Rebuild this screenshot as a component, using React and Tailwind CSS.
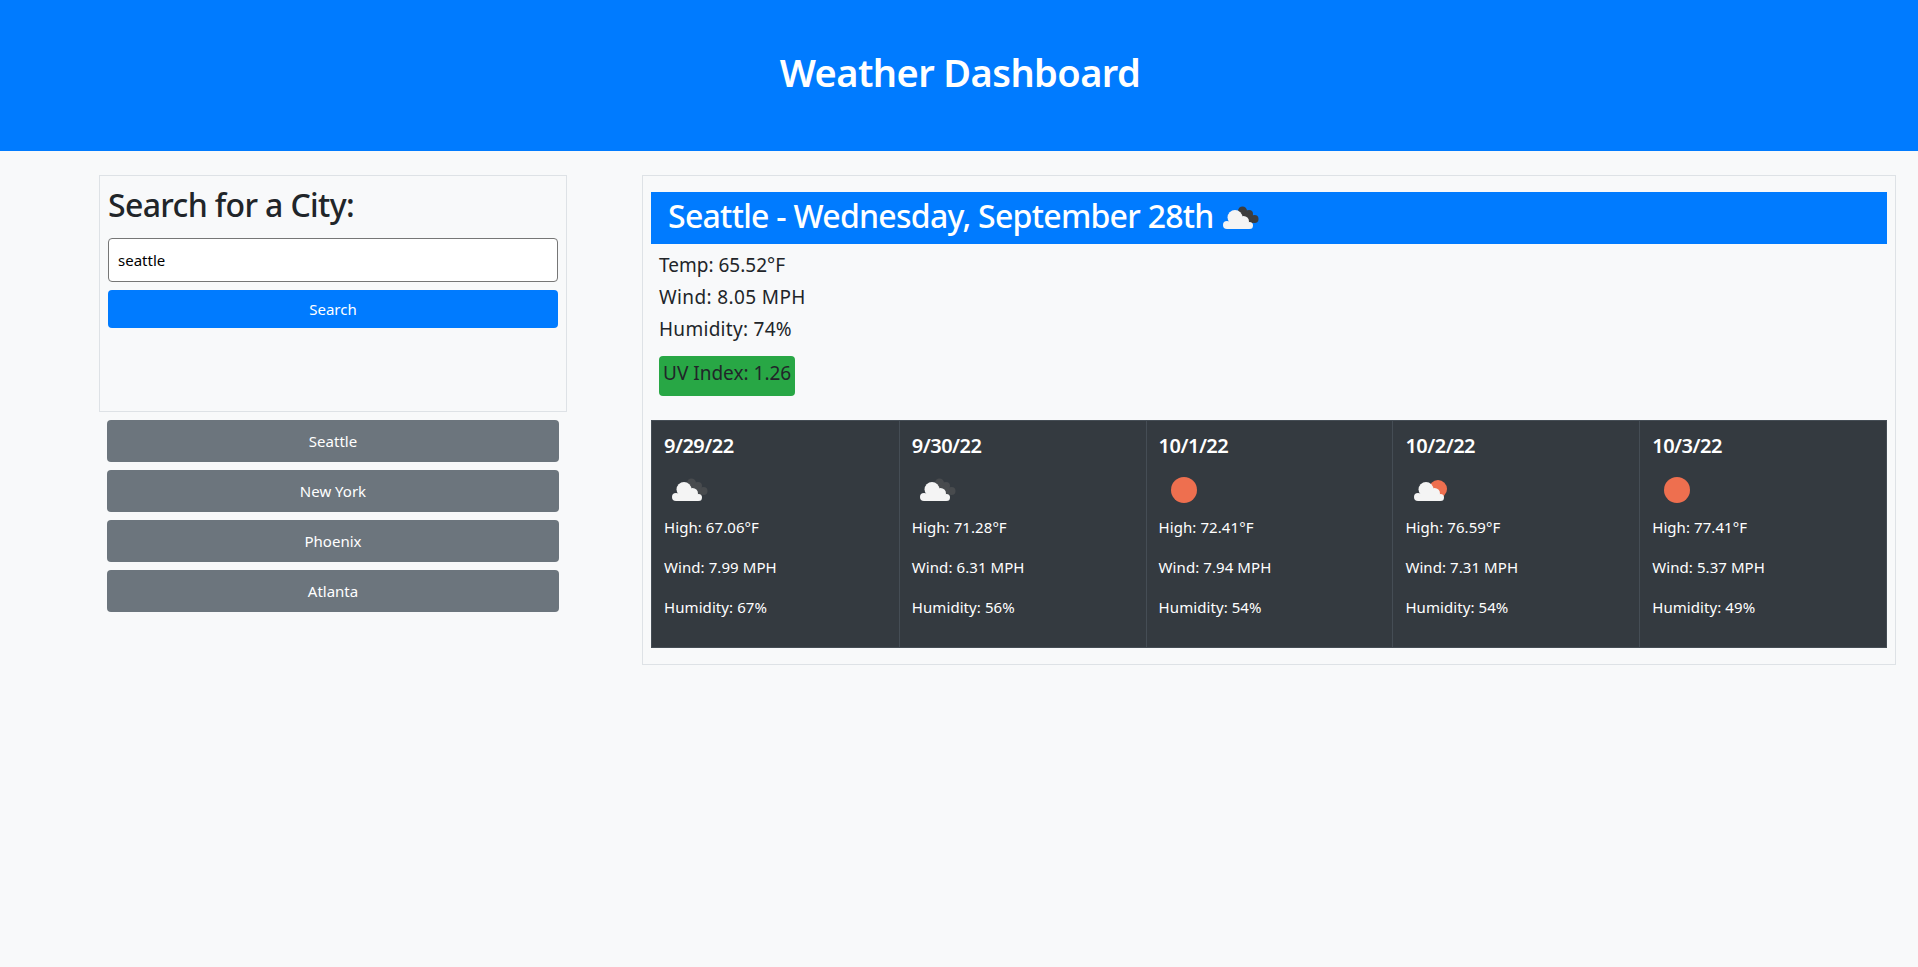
const forecast = [
  { date: "9/29/22", icon: "clouds", high: "67.06", wind: "7.99", humidity: "67" },
  { date: "9/30/22", icon: "clouds", high: "71.28", wind: "6.31", humidity: "56" },
  { date: "10/1/22", icon: "sun", high: "72.41", wind: "7.94", humidity: "54" },
  { date: "10/2/22", icon: "partly", high: "76.59", wind: "7.31", humidity: "54" },
  { date: "10/3/22", icon: "sun", high: "77.41", wind: "5.37", humidity: "49" },
];

const cities = ["Seattle", "New York", "Phoenix", "Atlanta"];

const WhiteCloud = ({ dx = 0 }) => (
  <g fill="#f4f4f4" transform={`translate(${dx} 0)`}>
    <circle cx="20" cy="24.500" r="7.500" />
    <circle cx="28.500" cy="28.500" r="5.500" />
    <circle cx="12" cy="32" r="4" />
    <circle cx="34.500" cy="32.500" r="3.500" />
    <rect x="12" y="30" width="22" height="6" />
  </g>
);

const WeatherIcon = ({ type, dark = "#484b4e" }) => (
  <svg viewBox="0 0 50 50" className="h-[50px] w-[50px] shrink-0">
    {type === "sun" && <circle cx="25" cy="25" r="13" fill="#ee6f4f" />}
    {type === "partly" && (
      <>
        <circle cx="33" cy="24" r="9" fill="#ee6f4f" />
        <WhiteCloud dx={1} />
      </>
    )}
    {type === "clouds" && (
      <>
        <g fill={dark}>
          <circle cx="27.500" cy="18" r="4.500" />
          <circle cx="34" cy="21" r="4" />
          <circle cx="39.500" cy="26" r="4" />
          <path d="M25 20 37 21 38 30H28z" />
        </g>
        <WhiteCloud />
      </>
    )}
  </svg>
);

const App = () => {
  return (
    <div className="min-h-[967px] bg-[#f8f9fa] font-['Noto_Sans',sans-serif] text-[#212529]">
      <header className="flex h-[151px] items-center justify-center bg-[#007bff] pb-[7px] pl-[2px]">
        <h1 className="text-[38px] leading-[48px] font-semibold tracking-[-0.015em] text-white">
          Weather Dashboard
        </h1>
      </header>

      <main className="flex pt-6 pl-[99px]">
        <aside className="w-[468px] shrink-0">
          <form className="h-[237px] border border-[#dee2e6] px-2 pt-[5px]">
            <h2 className="mb-[9px] text-[32px] leading-[48px] font-medium tracking-[-0.02em]">
              Search for a City:
            </h2>
            <input
              readOnly
              value="seattle"
              className="mb-2 block h-[44px] w-full rounded-sm border border-[#767676] bg-white px-[9px] text-[15px] text-black outline-none"
            />
            <button
              type="button"
              className="block h-[38px] w-full rounded-[4px] bg-[#007bff] text-[15px] text-white"
            >
              Search
            </button>
          </form>
          <div className="mt-2 flex flex-col gap-2 px-2">
            {cities.map((city) => (
              <button
                key={city}
                type="button"
                className="h-[42px] w-full rounded-[4px] bg-[#6c757d] text-[15px] text-white"
              >
                {city}
              </button>
            ))}
          </div>
        </aside>

        <section className="ml-[75px] h-[490px] w-[1254px] shrink-0 border border-[#dee2e6] pt-4 pr-2 pl-2">
          <div className="flex h-[52px] items-center bg-[#007bff] pl-[17px] text-white">
            <h2 className="mr-px pb-1 text-[32px] leading-[48px] font-medium tracking-[-0.0225em]">
              Seattle - Wednesday, September 28th
            </h2>
            <WeatherIcon type="clouds" dark="#3d3d3d" />
          </div>

          <div className="px-2 pt-[9px]">
            <p className="mb-2 text-[19px] leading-6">Temp: 65.52°F</p>
            <p className="mb-2 text-[19px] leading-6 tracking-[0.02em]">Wind: 8.05 MPH</p>
            <p className="mb-2 text-[19px] leading-6 tracking-[0.015em]">Humidity: 74%</p>
            <div className="mt-[7px] inline-flex h-10 items-center rounded-[4px] bg-[#28a745] px-1 pb-[6px] text-[19px] leading-6">
              UV Index: 1.26
            </div>
          </div>

          <div className="mt-6 grid grid-cols-5 border border-[#454d55] bg-[#343a40] text-white">
            {forecast.map((day, i) => (
              <div
                key={day.date}
                className={`h-[226px] px-3 pt-[13px] ${i > 0 ? "border-l border-[#454d55]" : ""}`}
              >
                <h5 className="text-[20px] leading-6 font-semibold tracking-[-0.025em]">{day.date}</h5>
                <div className="mt-[7px] h-[50px]">
                  <WeatherIcon type={day.icon} />
                </div>
                <p className="mb-4 text-[15px] leading-6 tracking-[0.005em]">High: {day.high}°F</p>
                <p className="mb-4 text-[15px] leading-6 tracking-[0.005em]">Wind: {day.wind} MPH</p>
                <p className="text-[15px] leading-6 tracking-[0.005em]">Humidity: {day.humidity}%</p>
              </div>
            ))}
          </div>
        </section>
      </main>
    </div>
  );
};

export default App;
